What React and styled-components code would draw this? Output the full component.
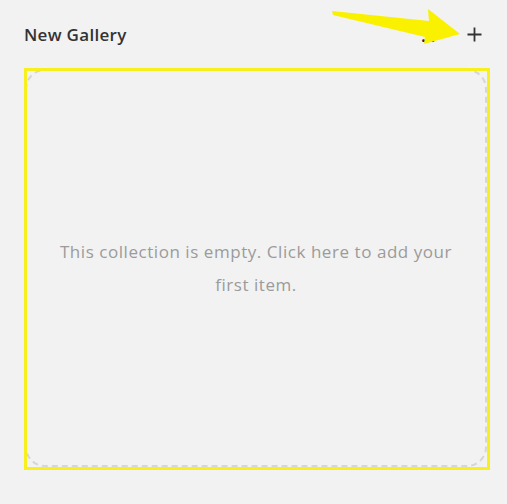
import React from 'react';
import styled, { createGlobalStyle } from 'styled-components';

const GlobalStyle = createGlobalStyle`
    html, body {
        margin: 0;
        padding: 0;
        background: #f2f2f2;
    }
    body {
        font-family: 'Open Sans', 'Liberation Sans', sans-serif;
    }
`;

const Page = styled.div`
    position: relative;
    width: 507px;
    height: 504px;
    padding: 19px 25px 0 24px;
    box-sizing: border-box;
    background: #f2f2f2;
`;

const Header = styled.div`
    display: flex;
    align-items: center;
    justify-content: space-between;
    height: 30px;
    margin-bottom: 20px;
`;

const Title = styled.h2`
    margin: 0;
    font-size: 17px;
    font-weight: 600;
    letter-spacing: 0.3px;
    color: #333;
`;

const Actions = styled.div`
    display: flex;
    align-items: center;
    gap: 32px;
`;

const More = styled.span`
    font-size: 16px;
    font-weight: 700;
    color: #222;
    line-height: 1;
    margin-top: 4px;
`;

const AddButton = styled.button`
    display: flex;
    align-items: center;
    justify-content: center;
    width: 15px;
    height: 15px;
    padding: 0;
    border: none;
    background: none;
    cursor: pointer;
`;

const Dropzone = styled.div`
    position: relative;
    display: flex;
    align-items: center;
    justify-content: center;
    width: 462px;
    height: 398px;
    margin-left: 1px;
    box-sizing: border-box;
    border: 2px dashed #d6d6d6;
    border-radius: 20px;
    padding: 0 30px;
    text-align: center;
    cursor: pointer;

    /* annotation highlight drawn over the drop zone */
    &::after {
        content: '';
        position: absolute;
        top: -3px;
        left: -3px;
        right: -5px;
        bottom: -5px;
        border: 3px solid #f7f01e;
        pointer-events: none;
    }
`;

const EmptyText = styled.p`
    margin: 0;
    max-width: 400px;
    font-size: 17px;
    letter-spacing: 0.55px;
    line-height: 33px;
    color: #9b9b9b;
`;

const Arrow = styled.svg`
    position: absolute;
    left: 0;
    top: 0;
    pointer-events: none;
`;

export default function App() {
    return (
        <>
            <GlobalStyle />
            <Page>
                <Header>
                    <Title>New Gallery</Title>
                    <Actions>
                        <More>...</More>
                        <AddButton aria-label="add">
                            <svg width="15" height="15" viewBox="0 0 15 15">
                                <path d="M7.5 0.5v14M0.5 7.5h14" stroke="#333" strokeWidth="1.8" fill="none" />
                            </svg>
                        </AddButton>
                    </Actions>
                </Header>
                <Dropzone>
                    <EmptyText>This collection is empty. Click here to add your first item.</EmptyText>
                </Dropzone>
                <Arrow width="507" height="60" viewBox="0 0 507 60">
                    <polygon
                        points="332,11 429,21 428,9 460,34 424,44 425,37 333,15"
                        fill="#f9f100"
                    />
                </Arrow>
            </Page>
        </>
    );
}
